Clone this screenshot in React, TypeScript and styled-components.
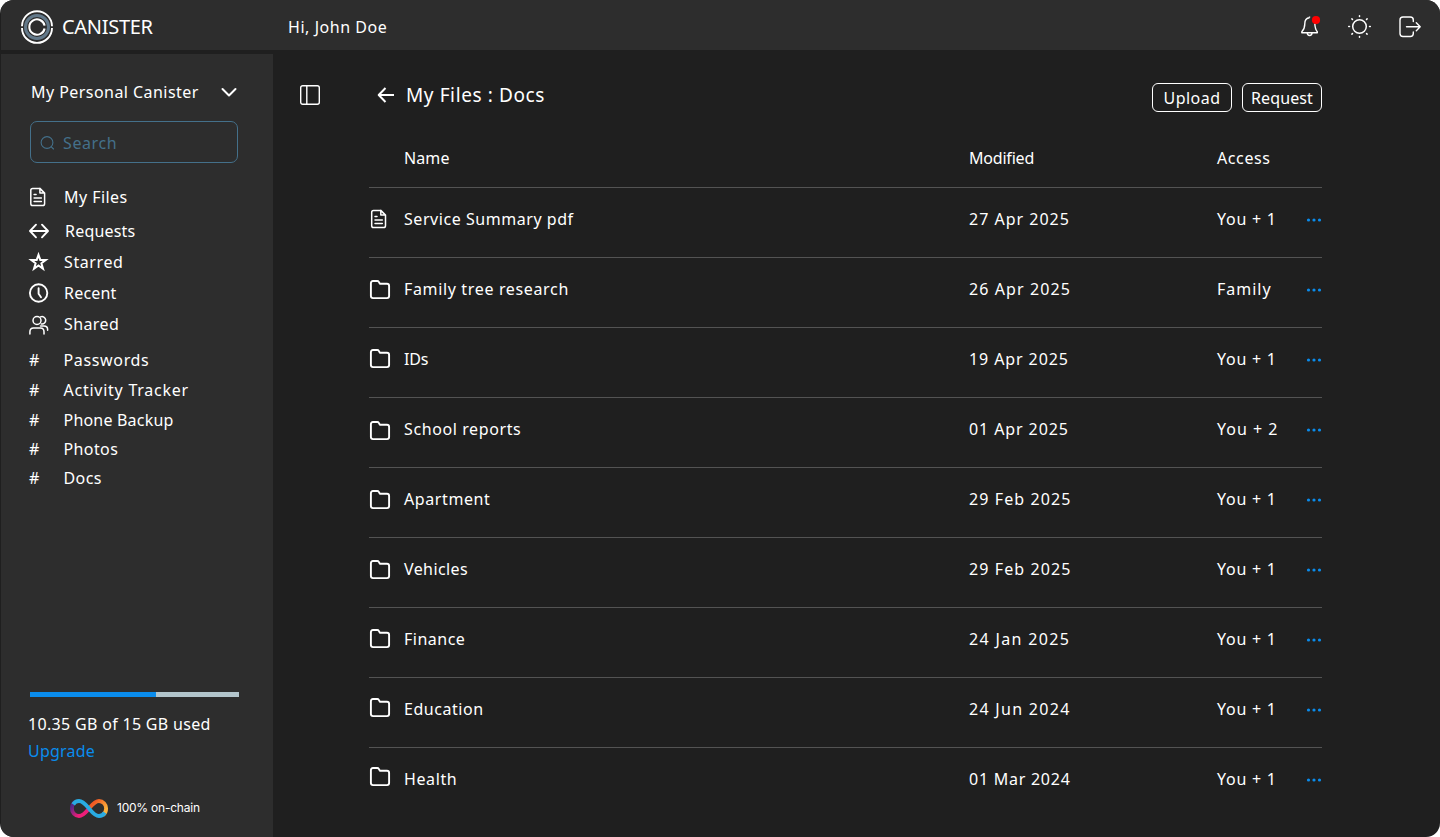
import React from "react";
import styled, { createGlobalStyle } from "styled-components";

const Global = createGlobalStyle`
  * { box-sizing: border-box; }
  html, body { margin: 0; padding: 0; background: #fff; }
  body { font-family: "Noto Sans", sans-serif; font-size: 16px; color: #fff; }
  button { font: inherit; color: inherit; background: none; border: 0; padding: 0; }
  svg { display: block; flex: none; overflow: visible; }
`;

const Shell = styled.div`
  width: 1440px;
  height: 837px;
  display: flex;
  flex-direction: column;
  background: #1f1f1f;
  border-radius: 14px;
  overflow: hidden;
`;

const TopBar = styled.header`
  height: 50px;
  flex: none;
  margin-left: 1px;
  display: flex;
  align-items: center;
  background: #2d2d2d;
  padding: 4px 19px 0 20px;
`;

const Brand = styled.div`
  width: 267px;
  display: flex;
  align-items: center;
  gap: 9px;
`;

const Label = styled.span<{ $track?: number; $size?: number }>`
  font-size: ${(p) => p.$size ?? 16}px;
  letter-spacing: ${(p) => p.$track ?? 0.6}px;
  line-height: 24px;
  white-space: nowrap;
`;

const TopActions = styled.div`
  margin-left: auto;
  display: flex;
  align-items: center;
  gap: 27px;
`;

const Body = styled.div`
  flex: 1;
  min-height: 0;
  margin-top: 4px;
  display: flex;
`;

const Sidebar = styled.aside`
  width: 272px;
  flex: none;
  margin-left: 1px;
  background: #2d2d2d;
  display: flex;
  flex-direction: column;
  padding: 26px 34px 0 27px;
`;

const Switcher = styled.div`
  display: flex;
  align-items: center;
  justify-content: space-between;
  height: 24px;
  padding: 0 2px 0 3px;
`;

const SearchBox = styled.div`
  height: 42px;
  width: 208px;
  margin: 17px 0 0 2px;
  border: 1px solid #44708a;
  border-radius: 7px;
  color: #44708a;
  display: flex;
  align-items: center;
  gap: 8px;
  padding: 2px 9px 0;
`;

const Nav = styled.nav`
  display: flex;
  flex-direction: column;
  margin-top: 22px;
`;

const NavItem = styled.div<{ $h: number }>`
  height: ${(p) => p.$h}px;
  display: flex;
  align-items: flex-start;
`;

const NavIcon = styled.span<{ $w?: number; $drop?: number }>`
  width: ${(p) => p.$w ?? 36}px;
  height: 24px;
  flex: none;
  display: flex;
  align-items: center;
  padding-left: 1px;
  padding-top: ${(p) => p.$drop ?? 0}px;
`;

const Storage = styled.section`
  margin-top: auto;
  display: flex;
  flex-direction: column;
`;

const Meter = styled.div`
  width: 209px;
  height: 5px;
  margin: 0 0 15px 2px;
  background: #b3c5cc;
`;

const MeterFill = styled.div`
  width: 60.3%;
  height: 100%;
  background: #0a8cec;
`;

const Upgrade = styled(Label)`
  color: #0a8cec;
  margin-top: 3px;
`;

const ChainBadge = styled.div`
  height: 24px;
  margin: 33px 0 17px 42px;
  display: flex;
  align-items: center;
  gap: 9px;
  font-family: Inter, sans-serif;
`;

const Main = styled.main`
  flex: 1;
  display: flex;
  align-items: flex-start;
  padding: 29px 0 0 27px;
`;

const PanelToggle = styled.button`
  width: 69px;
  height: 24px;
  display: flex;
  align-items: center;
`;

const Content = styled.section`
  width: 953px;
`;

const TitleRow = styled.div`
  height: 29px;
  display: flex;
  align-items: center;
  padding-left: 8px;
`;

const Title = styled(Label)`
  margin: -5px auto 0 11px;
`;

const BackIcon = styled.span`
  margin-top: -5px;
`;

const Pill = styled.button`
  width: 80px;
  height: 29px;
  margin-left: 10px;
  border: 1px solid #fff;
  border-radius: 6px;
  display: flex;
  align-items: center;
  justify-content: center;
`;

const Row = styled.div<{ $head?: boolean }>`
  height: ${(p) => (p.$head ? 76 : 70)}px;
  display: grid;
  grid-template-columns: 35px 565px 248px 89px 16px;
  align-items: center;
  border-bottom: 1px solid #535353;
  padding-bottom: ${(p) => (p.$head ? 0 : 6)}px;
  padding-top: ${(p) => (p.$head ? 18 : 0)}px;
  &:last-child { border-bottom-color: transparent; }
  & > ${Label} { margin-top: -2px; }
`;

const CellIcon = styled.span<{ $shift: number }>`
  padding-top: ${(p) => (p.$shift > 0 ? p.$shift * 2 : 0)}px;
  padding-bottom: ${(p) => (p.$shift < 0 ? -p.$shift * 2 : 0)}px;
`;

const Logo = () => (
  <svg width="32" height="32" viewBox="0 0 32 32" fill="none" strokeWidth="1.9">
    <path d="M1 15.300A15 15 0 0 1 31 15.300M1 16.900A15 15 0 0 0 31 16.900" stroke="#fff" />
    <circle cx="16" cy="16" r="11.5" stroke="#63798a" strokeWidth="3" />
    <path d="M23.6 14.6A7.7 7.7 0 1 0 23.6 17.500" stroke="#fff" strokeWidth="2.1" />
  </svg>
);

const Bell = () => (
  <svg width="24" height="24" viewBox="-1 0 24 24" fill="none" stroke="#fff" strokeWidth="1.4" strokeLinejoin="round">
    <path d="M11.500 2.700C8 3 6.800 5.500 6.800 8.700C6.800 13.500 5.800 14.700 3.800 16.700V17.700H19.300V16.700C17.500 14.700 17 13 16.800 8.500M11.500 2.700V1.500M9.200 18C9.400 21.300 13.900 21.300 14.100 18" />
    <circle cx="18" cy="5" r="4.1" fill="red" stroke="none" />
  </svg>
);

const Sun = () => (
  <svg width="24" height="24" viewBox="0.5 0.5 24 24" fill="none" stroke="#fff" strokeWidth="1.5" strokeLinecap="round">
    <circle cx="12" cy="12" r="6.8" />
    <path d="M12 1.200V2M12 22V22.800M1.200 12H2M22 12H22.800M4.400 4.400l.6.600M19 19L19.600 19.600M19.600 4.400l-.6.600M5 19L4.400 19.600" />
  </svg>
);

const Logout = () => (
  <svg width="22" height="22" viewBox="0 0 22 22" fill="none" stroke="#fff" strokeWidth="1.4" strokeLinecap="round" strokeLinejoin="round">
    <path d="M14.300 5.500V4Q14.300 1 11.300 1H4Q1 1 1 4V17.500Q1 20.500 4 20.500H11.300Q14.300 20.500 14.300 17.500V16M7.500 10.800H21M17.300 6.800L21.200 10.800L17.300 14.800" />
  </svg>
);

const FileGlyph = ({ inset = 0 }: { inset?: number }) => (
  <svg width="20" height="20" viewBox={`${inset} 0 20 20`} fill="none" stroke="#fff" strokeWidth="1.500" strokeLinejoin="round" strokeLinecap="round">
    <path d="M11.800 1.400H4.500Q2.700 1.400 2.700 3.200V16.700Q2.700 18.500 4.500 18.500H14.700Q16.500 18.500 16.500 16.700V6.100L11.800 1.400V6.100H16.500M6 7.500H8M6 11H13.300M6 14.500H13.300" />
  </svg>
);

const FolderGlyph = () => (
  <svg width="22" height="20" viewBox="0 0 22 20" fill="none" stroke="#fff" strokeWidth="1.900" strokeLinejoin="round">
    <path d="M1.900 3.200Q1.900 1 4 1H8.200Q9.300 1 9.800 1.900L10.900 3.800H18Q20.100 3.800 20.100 5.900V16Q20.100 18.100 18 18.100H4Q1.900 18.100 1.900 16Z" />
  </svg>
);

const Arrows = () => (
  <svg width="20" height="20" viewBox="0 0 20 20" fill="none" stroke="#fff" strokeWidth="1.900" strokeLinecap="round" strokeLinejoin="round">
    <path d="M1.500 10H18.500M7 3.700L1 10L7 16.300M13 3.700L19 10L13 16.300" />
  </svg>
);

const Star = () => (
  <svg width="20" height="20" viewBox="0 0 20 20" fill="none" stroke="#fff" strokeWidth="2" strokeMiterlimit="10">
    <path d="M9.500 2.800L11.300 7.900H16.800L12.400 11.300L14 16.800L9.500 13.500L5 16.800L6.600 11.300L2.200 7.900H7.700Z" />
  </svg>
);

const Clock = () => (
  <svg width="20" height="20" viewBox="0 0 20 20" fill="none" stroke="#fff" strokeWidth="1.900" strokeLinecap="round" strokeLinejoin="round">
    <circle cx="9.600" cy="10" r="8.700" />
    <path d="M9.600 5.200V10.800L12 14.200" />
  </svg>
);

const People = () => (
  <svg width="20" height="20" viewBox="0 0 20 20" fill="none" stroke="#fff" strokeWidth="1.500" strokeLinecap="round">
    <circle cx="8" cy="5.500" r="4" />
    <path d="M11.500 1.900A3.700 3.700 0 1 1 12.300 8.900M.900 19V17Q.900 13 4.500 13H11.500Q15 13 15 17V19M11.500 11H15Q18.600 11 18.600 14.300V15.200" />
  </svg>
);

const InfinityMark = () => (
  <svg width="38" height="19" viewBox="0 0 38 19" fill="none" strokeWidth="3.900">
    <defs>
      <linearGradient id="warm" x1="20" y1="0" x2="37" y2="14" gradientUnits="userSpaceOnUse">
        <stop offset=".25" stopColor="#f15a24" /><stop offset=".85" stopColor="#fbb03b" />
      </linearGradient>
      <linearGradient id="violet" x1="2" y1="3" x2="15" y2="17" gradientUnits="userSpaceOnUse">
        <stop offset=".15" stopColor="#522785" /><stop offset=".75" stopColor="#ed1e79" />
      </linearGradient>
    </defs>
    <path d="M19 9.500C22 6 25 2 29 2C33 2 36.100 5.500 36.100 9.500C36.100 12 35 14.500 33 16" stroke="url(#warm)" />
    <path d="M19 9.500C16 13 13 17 9 17C5 17 1.900 13.500 1.900 9.500C1.900 7 3 4.500 5 3" stroke="url(#violet)" />
    <path d="M3.200 5.400C4.500 3.300 6.600 2 9 2C13 2 16 6 19 9.500C22 13 25 17 29 17C31.400 17 33.500 15.700 34.800 13.600" stroke="#29abe2" />
  </svg>
);

const entries = [
  { name: "Service Summary pdf", track: 0.55, date: "27 Apr 2025", dateTrack: 1, access: "You + 1", accessTrack: 0.75, shift: -0.5, file: true },
  { name: "Family tree research", track: 0.65, date: "26 Apr 2025", dateTrack: 1.1, access: "Family", accessTrack: 1, shift: 0 },
  { name: "IDs", track: -0.2, date: "19 Apr 2025", dateTrack: 0.9, access: "You + 1", accessTrack: 0.75, shift: -1 },
  { name: "School reports", track: 0.6, date: "01 Apr 2025", dateTrack: 0.9, access: "You + 2", accessTrack: 1, shift: 1 },
  { name: "Apartment", track: 0.6, date: "29 Feb 2025", dateTrack: 1.1, access: "You + 1", accessTrack: 0.75, shift: 0 },
  { name: "Vehicles", track: 0.4, date: "29 Feb 2025", dateTrack: 1.1, access: "You + 1", accessTrack: 0.75, shift: 0 },
  { name: "Finance", track: 0.5, date: "24 Jan 2025", dateTrack: 1.35, access: "You + 1", accessTrack: 0.75, shift: -1 },
  { name: "Education", track: 0.55, date: "24 Jun 2024", dateTrack: 1.3, access: "You + 1", accessTrack: 0.75, shift: -2 },
  { name: "Health", track: 0.6, date: "01 Mar 2024", dateTrack: 0.75, access: "You + 1", accessTrack: 0.75, shift: -3 },
];

const places = [
  { text: "My Files", icon: <FileGlyph inset={0.9} />, h: 34, track: 0.45 },
  { text: "Requests", icon: <Arrows />, h: 31, track: 0.2, w: 37 },
  { text: "Starred", icon: <Star />, h: 31, track: 0.6 },
  { text: "Recent", icon: <Clock />, h: 31, track: 0.2 },
  { text: "Shared", icon: <People />, h: 36, track: 0.4, drop: 2 },
];

const tags = [
  { text: "Passwords", h: 30, track: 0.65 },
  { text: "Activity Tracker", h: 30, track: 0.75 },
  { text: "Phone Backup", h: 29, track: 0.2 },
  { text: "Photos", h: 29, track: 0.4 },
  { text: "Docs", h: 30, track: 0.4 },
];

export default function App() {
  return (
    <>
      <Global />
      <Shell>
        <TopBar>
          <Brand>
            <Logo />
            <Label $size={20} $track={-0.3}>CANISTER</Label>
          </Brand>
          <Label $track={0.55}>Hi, John Doe</Label>
          <TopActions>
            <Bell />
            <Sun />
            <Logout />
          </TopActions>
        </TopBar>
        <Body>
          <Sidebar>
            <Switcher>
              <Label $track={0.45}>My Personal Canister</Label>
              <svg width="16" height="10" viewBox="0 0 16 10" fill="none" stroke="#fff" strokeWidth="2" strokeLinecap="round" strokeLinejoin="round">
                <path d="M1.500 2L8 8.500L14.500 2" />
              </svg>
            </Switcher>
            <SearchBox>
              <svg width="15" height="15" viewBox="0 0 15 15" fill="none" stroke="currentColor" strokeWidth="1.100" strokeLinecap="round">
                <circle cx="7" cy="6.500" r="5.900" />
                <path d="M11.300 10.800L13.500 13" />
              </svg>
              <Label>Search</Label>
            </SearchBox>
            <Nav>
              {places.map((p) => (
                <NavItem key={p.text} $h={p.h}>
                  <NavIcon $w={p.w} $drop={p.drop}>{p.icon}</NavIcon>
                  <Label $track={p.track}>{p.text}</Label>
                </NavItem>
              ))}
              {tags.map((t) => (
                <NavItem key={t.text} $h={t.h}>
                  <NavIcon $w={35.5}><Label>#</Label></NavIcon>
                  <Label $track={t.track}>{t.text}</Label>
                </NavItem>
              ))}
            </Nav>
            <Storage>
              <Meter><MeterFill /></Meter>
              <Label $track={0.32}>10.35 GB of 15 GB used</Label>
              <Upgrade $track={0.2}>Upgrade</Upgrade>
              <ChainBadge>
                <InfinityMark />
                <Label $size={12} $track={-0.22}>100% on-chain</Label>
              </ChainBadge>
            </Storage>
          </Sidebar>
          <Main>
            <PanelToggle aria-label="Toggle sidebar">
              <svg width="20" height="20" viewBox="0 0 20 20" fill="none" stroke="#fff" strokeWidth="1.400">
                <rect x=".7" y=".7" width="18.600" height="18.600" rx="2" />
                <path d="M6.800 1V19" />
              </svg>
            </PanelToggle>
            <Content>
              <TitleRow>
                <BackIcon>
                  <svg width="18" height="16" viewBox="0 0 18 16" fill="none" stroke="#fff" strokeWidth="2" strokeLinejoin="round">
                    <path d="M17 8H2M8.500 1L1.700 8L8.500 15" />
                  </svg>
                </BackIcon>
                <Title $size={19} $track={0.6}>My Files : Docs</Title>
                <Pill><Label $track={0.45}>Upload</Label></Pill>
                <Pill><Label $track={0.1}>Request</Label></Pill>
              </TitleRow>
              <Row $head>
                <span />
                <Label $track={0.1}>Name</Label>
                <Label $track={-0.2}>Modified</Label>
                <Label>Access</Label>
              </Row>
              {entries.map((f) => (
                <Row key={f.name}>
                  <CellIcon $shift={f.shift}>{f.file ? <FileGlyph /> : <FolderGlyph />}</CellIcon>
                  <Label $track={f.track}>{f.name}</Label>
                  <Label $track={f.dateTrack}>{f.date}</Label>
                  <Label $track={f.accessTrack}>{f.access}</Label>
                  <svg width="16" height="4" viewBox="0 0 16 4" fill="#0a8cec">
                    <circle cx="2.500" cy="2" r="1.600" /><circle cx="8" cy="2" r="1.600" /><circle cx="13.500" cy="2" r="1.600" />
                  </svg>
                </Row>
              ))}
            </Content>
          </Main>
        </Body>
      </Shell>
    </>
  );
}
